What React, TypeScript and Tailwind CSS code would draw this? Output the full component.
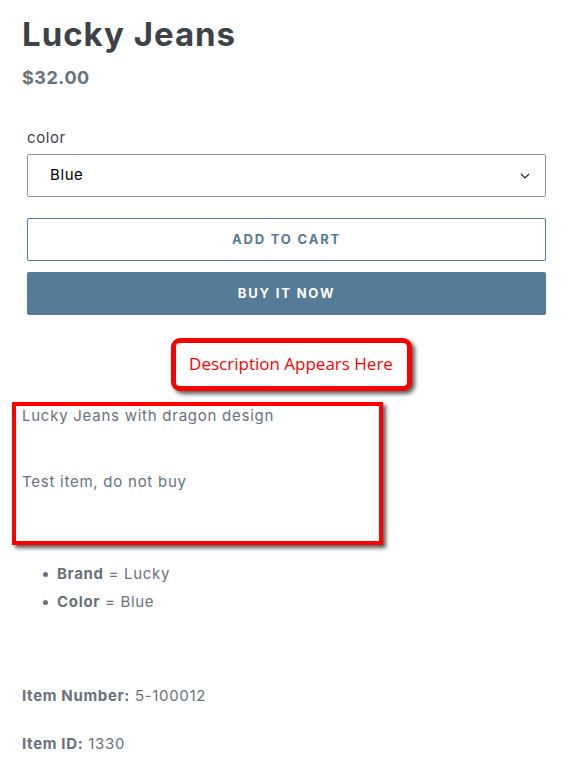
import React from "react";

const body = "font-['Inter','Liberation_Sans',sans-serif]";

function Callout() {
  return (
    <div className="flex justify-center mt-[23px]">
      <div className="w-[241px] h-[53px] border-[5px] border-[#ff0000] rounded-[9px] bg-white shadow-[3px_3px_4px_rgba(0,0,0,0.65)] flex items-center justify-center">
        <span className="font-['Open_Sans','Noto_Sans',sans-serif] text-[17px] text-[#ff0000] leading-none -mt-[2px]">
          Description Appears Here
        </span>
      </div>
    </div>
  );
}

export default function App() {
  return (
    <div className={`${body} bg-white min-h-screen px-[22px] pt-[14px] pb-6`}>
      <h1 className="text-[33px] leading-[40px] font-bold text-[#3d4246] tracking-[0.03em]">Lucky Jeans</h1>
      <p className="mt-[12px] text-[18px] leading-[24px] font-bold text-[#69727b] tracking-[0.03em]">$32.00</p>

      <div className="ml-[5px] w-[519px]">
        <label className="block mt-[38px] text-[15px] leading-[20px] text-[#3d4246] tracking-[0.04em]">color</label>
        <div className="mt-[6px] h-[43px] border border-[#949494] rounded-[2px] flex items-center justify-between pl-[22px] pr-[15px]">
          <span className="text-[15px] text-black tracking-[0.04em]">Blue</span>
          <svg width="10" height="6" viewBox="0 0 10 6" fill="none">
            <path d="M1 1L5 5L9 1" stroke="#222" strokeWidth="1.2" />
          </svg>
        </div>
        <button className="mt-[21px] w-full h-[43px] border border-[#557b97] rounded-[2px] bg-white text-[#557b97] text-[13px] font-bold uppercase tracking-[0.14em]">
          Add to cart
        </button>
        <button className="mt-[11px] w-full h-[43px] rounded-[2px] bg-[#557b97] text-white text-[13px] font-bold uppercase tracking-[0.14em]">
          Buy it now
        </button>
      </div>

      <Callout />

      <div className="relative mt-[14px] text-[15px] leading-[22px] text-[#69727b] tracking-[0.05em]">
        <p>Lucky Jeans with dragon design</p>
        <p className="mt-[44px]">Test item, do not buy</p>
        <div className="absolute left-[-10px] top-[-3px] w-[371px] bottom-[-52px] border-[4px] border-[#ff0000] shadow-[3px_3px_4px_rgba(0,0,0,0.65)] pointer-events-none" />
      </div>

      <ul className="mt-[67px] text-[15px] leading-[28px] text-[#69727b] tracking-[0.045em]">
        <li className="flex items-center">
          <span className="ml-[21px] mr-[9px] w-[5px] h-[5px] rounded-full bg-[#69727b]" />
          <span><b>Brand</b> = Lucky</span>
        </li>
        <li className="flex items-center">
          <span className="ml-[21px] mr-[9px] w-[5px] h-[5px] rounded-full bg-[#69727b]" />
          <span><b>Color</b> = Blue</span>
        </li>
      </ul>

      <p className="mt-[69px] text-[15px] leading-[22px] text-[#69727b] tracking-[0.045em]">
        <b>Item Number:</b> 5-100012
      </p>
      <p className="mt-[26px] text-[15px] leading-[22px] text-[#69727b] tracking-[0.045em]">
        <b>Item ID:</b> 1330
      </p>
    </div>
  );
}
